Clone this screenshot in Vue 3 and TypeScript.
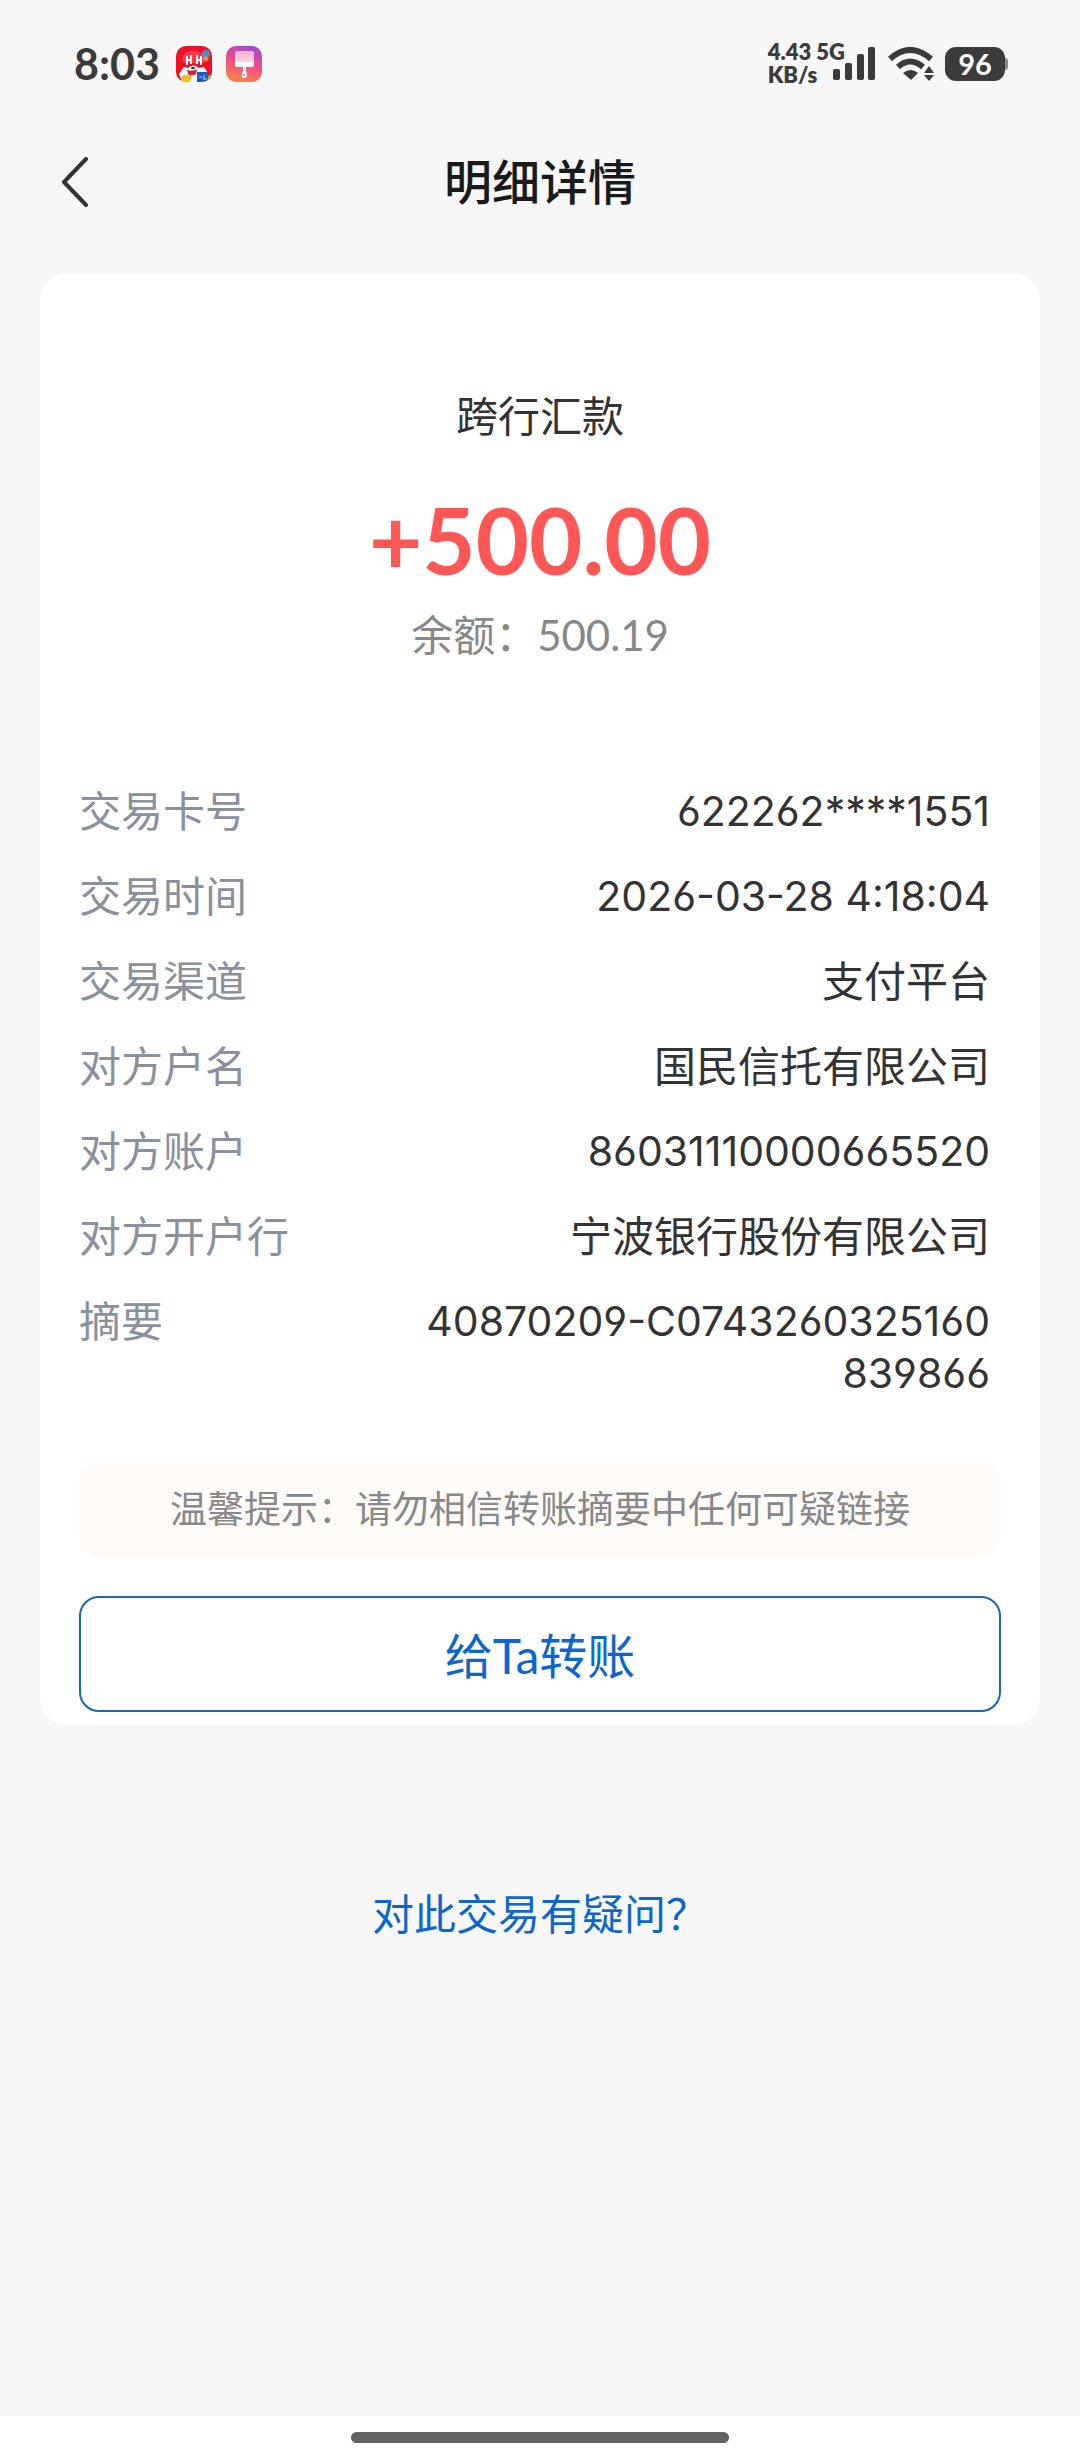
<script setup lang="ts">
interface DetailRow {
  label: string
  value: string
  numeric?: boolean
}

const rows: DetailRow[] = [
  { label: '交易卡号', value: '622262****1551', numeric: true },
  { label: '交易时间', value: '2026-03-28 4:18:04', numeric: true },
  { label: '交易渠道', value: '支付平台' },
  { label: '对方户名', value: '国民信托有限公司' },
  { label: '对方账户', value: '86031110000665520', numeric: true },
  { label: '对方开户行', value: '宁波银行股份有限公司' },
  { label: '摘要', value: '40870209-C0743260325160839866', numeric: true },
]
</script>

<template>
  <div class="page">
    <div class="status">
      <div class="status-left">
        <span class="clock">8:03</span>
        <svg class="app-icon" viewBox="0 0 36 36" aria-hidden="true">
          <defs>
            <clipPath id="mall-clip"><rect width="36" height="36" rx="10" /></clipPath>
          </defs>
          <g clip-path="url(#mall-clip)">
            <rect width="36" height="36" fill="#ee1128" />
            <path d="M7 17C5 8 12 4 18 5s12 4 10 12z" fill="#fb3b45" />
            <circle cx="30" cy="8" r="4" fill="#4a90c8" />
            <path d="M26 12l4-2 3 3-3 3z" fill="#f08a4a" />
            <path d="M11 10v9M15 9v9M10 14h6M21 9v9M25 10v9M20 14h6" stroke="#fff" stroke-width="2" fill="none" />
            <path d="M3 28l5-7 4 1q5-5 11 0l5-1 4 6-2 9H6z" fill="#fff" />
            <path d="M11 24q5 2 10-1l-1 5q-5 3-8 0z" fill="#d8232f" />
            <ellipse cx="17" cy="22" rx="2" ry="1" fill="#222" />
            <path d="M5 31c3-3 8-3 11 0l-2 5H5z" fill="#f8bd20" />
            <path d="M21 26h11v10H21z" fill="#1f57c4" />
            <path d="M23 31h3M28 29v4M27 33h4" stroke="#a8d0ff" stroke-width="1" />
            <path d="M32 30l4-2v8h-4z" fill="#7cb84a" />
          </g>
        </svg>
        <svg class="app-icon" viewBox="0 0 36 36" aria-hidden="true">
          <defs>
            <linearGradient id="brush-bg" x1="0.9" y1="0" x2="0.6" y2="1">
              <stop offset="0" stop-color="#9152cc" />
              <stop offset="0.5" stop-color="#ea4a8c" />
              <stop offset="1" stop-color="#fb7d4e" />
            </linearGradient>
            <linearGradient id="brush-head" x1="0" y1="0" x2="0" y2="1">
              <stop offset="0" stop-color="#ffb3d6" />
              <stop offset="1" stop-color="#ffd3e8" />
            </linearGradient>
          </defs>
          <rect width="36" height="36" rx="10" fill="url(#brush-bg)" />
          <rect x="9" y="5" width="19" height="12" rx="2" fill="url(#brush-head)" />
          <path d="M9 16h19v3q0 2-2 2h-6v3l1 5q0 3-3 3t-2-3l1-5v-3h-6q-2 0-2-2z" fill="#fff" />
          <circle cx="18" cy="29" r="1" fill="#f0608a" />
        </svg>
      </div>
      <div class="status-right">
        <div class="network"><span>4.43 5G</span><span>KB/s</span></div>
        <svg class="signal" viewBox="0 0 43 34" aria-hidden="true">
          <rect x="0" y="22" width="7" height="11" rx="2" />
          <rect x="12" y="16" width="7" height="17" rx="2" />
          <rect x="24" y="7" width="7" height="26" rx="2" />
          <rect x="35" y="0" width="7" height="33" rx="2" />
        </svg>
        <svg class="wifi" viewBox="0 0 47 34" aria-hidden="true">
          <path d="M2 12Q22-6 43 12" fill="none" stroke="#3b3b3b" stroke-width="6" />
          <path d="M10 20Q22 9 35 20" fill="none" stroke="#3b3b3b" stroke-width="6" />
          <path d="M15 26q8-6 15 0l-7 7z" />
          <path d="M41 19l5 7h-10zM36 28h10l-5 6z" />
        </svg>
        <div class="battery">96</div>
      </div>
    </div>

    <header class="header">
      <button class="back" type="button" aria-label="返回">
        <svg viewBox="0 0 28 50" aria-hidden="true">
          <path d="M25 2L3 25l22 23" fill="none" stroke="#333" stroke-width="4" stroke-linecap="round" stroke-linejoin="round" />
        </svg>
      </button>
      <h1>明细详情</h1>
    </header>

    <main>
      <section class="card">
        <h2 class="kind">跨行汇款</h2>
        <p class="amount">+500.00</p>
        <p class="balance">余额：500.19</p>

        <dl class="details">
          <div v-for="row in rows" :key="row.label" class="row">
            <dt>{{ row.label }}</dt>
            <dd :class="{ numeric: row.numeric }">{{ row.value }}</dd>
          </div>
        </dl>

        <p class="tip">温馨提示：请勿相信转账摘要中任何可疑链接</p>
        <button class="transfer" type="button">给Ta转账</button>
      </section>

      <a class="question" href="#">对此交易有疑问？</a>
    </main>

    <div class="home"><span class="home-bar"></span></div>
  </div>
</template>

<style>
body {
  margin: 0;
  background: #f7f7f7;
}
</style>

<style scoped>
.page {
  display: flex;
  flex-direction: column;
  min-height: 100vh;
  background: #f7f7f7;
  color: #333;
  font-family: Lato, "Noto Sans CJK SC", sans-serif;
  font-size: 42px;
  line-height: 52px;
}

h1,
h2,
p,
dl,
dd {
  margin: 0;
}

.status {
  display: flex;
  align-items: center;
  justify-content: space-between;
  height: 128px;
  padding: 0 72px 0 74px;
  color: #3b3b3b;
}

.status-left,
.status-right {
  display: flex;
  align-items: center;
}

.status-left {
  gap: 14px;
}

.clock {
  margin-right: 2px;
  font-size: 43px;
  font-weight: 700;
}

.app-icon {
  width: 36px;
  height: 36px;
}

.network {
  display: flex;
  flex-direction: column;
  margin-bottom: 2px;
  font-size: 22px;
  font-weight: 800;
  line-height: 23px;
  white-space: nowrap;
}

.signal,
.wifi {
  fill: #3b3b3b;
}

.signal {
  width: 43px;
  height: 34px;
  margin-left: -12px;
}

.wifi {
  width: 47px;
  height: 34px;
  margin-left: 12px;
}

.battery {
  position: relative;
  width: 60px;
  height: 34px;
  margin: 0 3px 0 10px;
  border-radius: 11px;
  background: #3b3b3b;
  color: #fff;
  font-size: 29px;
  font-weight: 700;
  line-height: 34px;
  text-align: center;
}

.battery::after {
  position: absolute;
  top: 11px;
  right: -3px;
  width: 3px;
  height: 12px;
  border-radius: 0 3px 3px 0;
  background: #8c8c8c;
  content: "";
}

.header {
  display: grid;
  grid-template-columns: 1fr auto 1fr;
  align-items: center;
  height: 108px;
  padding: 0 61px;
}

.back {
  justify-self: start;
  padding: 0;
  border: 0;
  background: none;
}

.back svg {
  display: block;
  width: 28px;
  height: 50px;
}

h1 {
  color: #1a1a1a;
  font-size: 48px;
  font-weight: 500;
  line-height: 60px;
}

main {
  display: flex;
  flex-direction: column;
  align-items: center;
  padding: 38px 40px 80px;
}

.card {
  box-sizing: border-box;
  width: 100%;
  padding: 116px 39px 13px;
  border-radius: 26px;
  background: #fff;
  text-align: center;
}

.kind {
  font-size: 42px;
  font-weight: 400;
}

.amount {
  margin-top: 48px;
  color: #ff5656;
  font-size: 92px;
  font-weight: 700;
  line-height: 100px;
}

.balance {
  margin-top: 19px;
  color: #888;
}

.details {
  display: flex;
  flex-direction: column;
  gap: 33px;
  margin-top: 124px;
  padding-right: 11px;
}

.row {
  display: flex;
  justify-content: space-between;
}

dt {
  color: #8a919e;
}

dd {
  width: 63%;
  text-align: right;
  word-break: break-all;
}

.numeric {
  font-family: Inter, "Noto Sans CJK SC", sans-serif;
  font-size: 41px;
  font-feature-settings: "cv03", "cv04";
}

.tip {
  margin-top: 63px;
  padding: 21px 0 22px;
  border-radius: 20px;
  background: #fffbf8;
  color: #888;
  font-size: 37px;
}

.transfer {
  display: block;
  width: 100%;
  height: 116px;
  margin-top: 39px;
  padding: 0 0 3px;
  border: 2px solid #1a66b8;
  border-radius: 20px;
  background: none;
  color: #0d66cc;
  font-family: inherit;
  font-size: 48px;
}

.question {
  margin-top: 163px;
  color: #0d66cc;
  text-decoration: none;
}

.home {
  display: flex;
  justify-content: center;
  height: 28px;
  margin-top: auto;
  padding-top: 16px;
  background: #fff;
}

.home-bar {
  width: 35%;
  height: 11px;
  border-radius: 6px;
  background: #636363;
}
</style>
